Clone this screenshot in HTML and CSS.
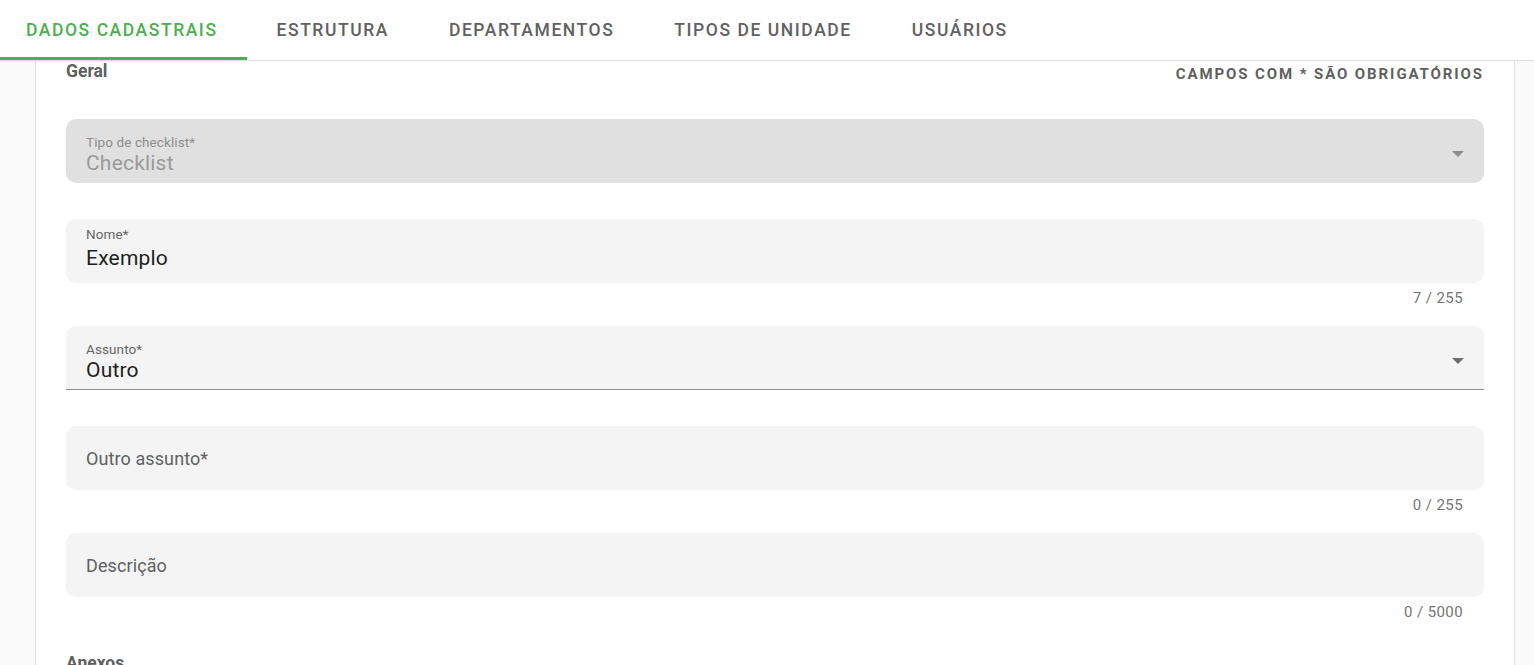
FILE: index.html
```html
<!DOCTYPE html>
<html lang="pt-BR">
<head>
<meta charset="utf-8">
<title>Dados cadastrais</title>
<link rel="stylesheet" href="styles.css">
</head>
<body>
<nav class="tabs">
  <div class="tab active">Dados cadastrais</div>
  <div class="tab">Estrutura</div>
  <div class="tab">Departamentos</div>
  <div class="tab">Tipos de unidade</div>
  <div class="tab">Usuários</div>
</nav>
<main class="main">
  <section class="card">
    <div class="card-header">
      <h2 class="section-title">Geral</h2>
      <div class="required-note">Campos com * são obrigatórios</div>
    </div>

    <div class="group">
      <div class="field select disabled">
        <div class="field-content">
          <div class="label">Tipo de checklist*</div>
          <div class="value">Checklist</div>
        </div>
        <span class="arrow"></span>
      </div>
      <div class="details"></div>
    </div>

    <div class="group has-counter">
      <div class="field text">
        <div class="field-content">
          <div class="label">Nome*</div>
          <div class="value">Exemplo</div>
        </div>
      </div>
      <div class="details"><span class="counter">7 / 255</span></div>
    </div>

    <div class="group">
      <div class="field select underlined">
        <div class="field-content">
          <div class="label">Assunto*</div>
          <div class="value">Outro</div>
        </div>
        <span class="arrow"></span>
      </div>
      <div class="details"></div>
    </div>

    <div class="group has-counter">
      <div class="field empty">
        <div class="placeholder-label">Outro assunto*</div>
      </div>
      <div class="details"><span class="counter">0 / 255</span></div>
    </div>

    <div class="group has-counter">
      <div class="field empty">
        <div class="placeholder-label">Descrição</div>
      </div>
      <div class="details"><span class="counter">0 / 5000</span></div>
    </div>

    <h2 class="section-title anexos">Anexos</h2>
  </section>
</main>
</body>
</html>
```

FILE: styles.css
```css
* {
  box-sizing: border-box;
}

html, body {
  margin: 0;
  padding: 0;
}

body {
  background: #fafafa;
  font-family: Roboto, "Liberation Sans", Arial, sans-serif;
  color: #212121;
  height: 665px;
  overflow: hidden;
}

/* Tabs */
.tabs {
  display: flex;
  height: 61px;
  background: #ffffff;
  border-bottom: 1px solid #e0e0e0;
}

.tab {
  display: flex;
  align-items: center;
  padding: 0 30px;
  height: 60px;
  font-size: 17.5px;
  font-weight: 500;
  letter-spacing: 1.56px;
  text-transform: uppercase;
  color: #616161;
  border-bottom: 3px solid transparent;
  padding-top: 3px;
}

.tab:first-child {
  padding-left: 26px;
  padding-right: 29px;
}

.tab.active {
  color: #4caf50;
  border-bottom-color: #4caf50;
}

/* Main area */
.main {
  padding: 0 19px 0 35px;
}

.card {
  background: #ffffff;
  border-left: 1px solid #e0e0e0;
  border-right: 1px solid #e0e0e0;
  padding: 0 30px;
  min-height: 604px;
}

.card-header {
  display: flex;
  justify-content: space-between;
  align-items: flex-start;
  height: 58px;
}

.section-title {
  margin: 0;
  font-size: 17.5px;
  line-height: 20px;
  font-weight: 700;
  color: #5f5f5f;
}

.required-note {
  margin-top: 4px;
  font-size: 15px;
  line-height: 18px;
  font-weight: 700;
  letter-spacing: 1.9px;
  text-transform: uppercase;
  color: #616161;
}

/* Fields */
.group {
  margin-bottom: 12px;
}

.field {
  display: flex;
  height: 64px;
  padding: 0 20px;
  background: #f4f4f4;
  border-radius: 10px;
}

.field-content {
  flex: 1;
}

.field.select .field-content {
  padding-top: 15px;
}

.field.select .value {
  margin-top: 1px;
}

.field.text .field-content {
  padding-top: 7px;
}

.field.text .value {
  margin-top: 4px;
}

.field.disabled {
  background: #e0e0e0;
}

.field.underlined {
  border-radius: 10px 10px 0 0;
  border-bottom: 1px solid #8f8f8f;
}

.label {
  font-size: 13.5px;
  line-height: 16px;
  letter-spacing: 0.1px;
  color: #666666;
}

.value {
  font-size: 21px;
  line-height: 24px;
  letter-spacing: 0.2px;
  color: #1f1f1f;
}

.field.disabled .label {
  color: #8e8e8e;
}

.field.disabled .value {
  color: #9a9a9a;
}

.arrow {
  width: 0;
  height: 0;
  margin-top: 32px;
  border-left: 6px solid transparent;
  border-right: 6px solid transparent;
  border-top: 6px solid #6e6e6e;
}

.field.disabled .arrow {
  border-top-color: #8e8e8e;
}

.field.empty {
  align-items: center;
}

.placeholder-label {
  font-size: 18px;
  letter-spacing: 0.1px;
  color: #616161;
  padding-top: 1px;
}

.details {
  height: 24px;
  padding: 6px 21px 0 20px;
  display: flex;
  justify-content: flex-end;
}

.group.has-counter .details {
  height: 31px;
}

.counter {
  font-size: 15px;
  line-height: 18px;
  letter-spacing: 0.4px;
  color: #757575;
}

.anexos {
  margin-top: 25px;
}
```
